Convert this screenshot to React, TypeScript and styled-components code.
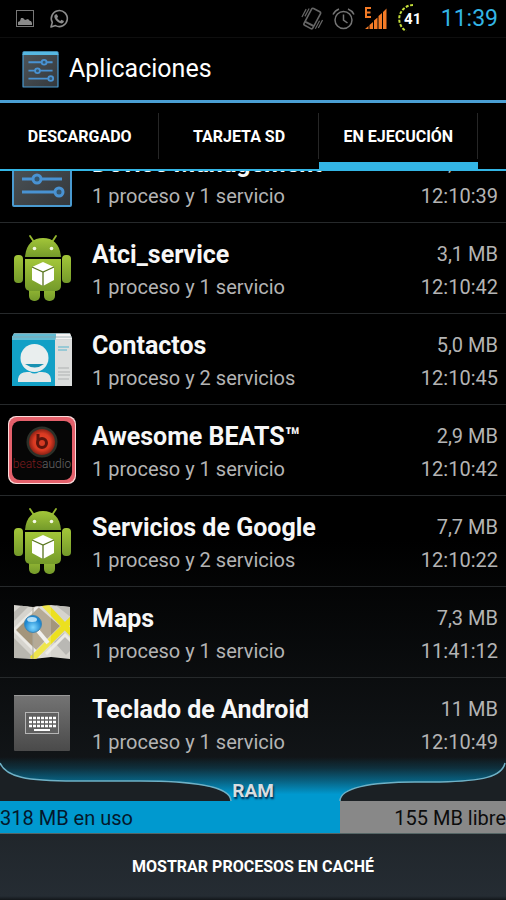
import React from 'react';
import styled, { createGlobalStyle } from 'styled-components';

const GlobalStyle = createGlobalStyle`
  *, *::before, *::after { box-sizing: border-box; }
  body { margin: 0; background: #000; }
  button { font: inherit; color: inherit; border: 0; padding: 0; background: none; cursor: pointer; }
`;

const Screen = styled.div`
  display: flex;
  flex-direction: column;
  height: 100vh;
  overflow: hidden;
  color: #fff;
  background: linear-gradient(#000 0, #000 60%, #14181b 88%, #1c2024 100%);
  font-family: Roboto, "Liberation Sans", sans-serif;
`;

const StatusBar = styled.div`
  display: flex;
  align-items: center;
  justify-content: space-between;
  flex: none;
  height: 37px;
  padding: 0 8px 0 15px;
  background: #000;
`;

const StatusGroup = styled.div<{ $gap: number }>`
  display: flex;
  align-items: center;
  gap: ${(p) => p.$gap}px;
`;

const Clock = styled.time`
  margin-left: 3px;
  font-size: 23px;
  line-height: 36px;
  color: #33b5e5;
`;

const ActionBar = styled.header`
  display: flex;
  align-items: center;
  gap: 8px;
  flex: none;
  height: 66px;
  padding: 0 20px;
  background: #000;
  border-top: 1px solid #0e0e0e;
  border-bottom: 3px solid #4a9fd4;
`;

const Title = styled.h1`
  margin: 0;
  font-size: 25px;
  line-height: 36px;
  font-weight: 400;
`;

const Tabs = styled.nav`
  display: grid;
  grid-template-columns: repeat(3, 1fr) 28px;
  flex: none;
  height: 68px;
  background: #000;
  border-bottom: 2px solid #33b5e5;
`;

const Tab = styled.button<{ $active?: boolean }>`
  height: 68px;
  padding-top: ${(p) => (p.$active ? 9 : 0)}px;
  border-bottom: ${(p) => (p.$active ? '9px solid #33b5e5' : '0')};
  background: linear-gradient(#262626, #262626) right 10px / 1px 46px no-repeat;
  font-size: 16px;
  line-height: 24px;
  font-weight: 700;
  white-space: nowrap;
`;

const List = styled.ul`
  display: flex;
  flex-direction: column;
  justify-content: flex-end;
  flex: 1;
  min-height: 0;
  margin: 0;
  padding: 0;
  overflow: hidden;
  list-style: none;
`;

const Row = styled.li`
  display: grid;
  grid-template-columns: 68px 1fr auto;
  column-gap: 16px;
  align-items: center;
  flex: none;
  height: 91px;
  padding: 0 8px;
  border-bottom: 1px solid #26292b;

  &:last-child { border-bottom-color: transparent; }
`;

const Lines = styled.div<{ $end?: boolean }>`
  display: flex;
  flex-direction: column;
  padding-top: 5px;
  text-align: ${(p) => (p.$end ? 'right' : 'left')};
  white-space: nowrap;
`;

const Name = styled.span`
  font-size: 25px;
  line-height: 33px;
  font-weight: 700;
  color: #f7f7f7;
`;

const Detail = styled.span`
  font-size: 20px;
  line-height: 33px;
  color: #b4b4b4;
`;

const Ram = styled.section`
  position: relative;
  flex: none;
  margin-top: -12px;
`;

const Shelf = styled.svg`
  display: block;
  width: 100%;
  height: 44px;
`;

const RamLabel = styled.h2`
  position: absolute;
  top: 22px;
  left: 0;
  right: 0;
  margin: 0;
  font-size: 19px;
  line-height: 24px;
  font-weight: 700;
  text-align: center;
  color: #d9dde0;
  text-shadow: 1px 2px 2px #024;
`;

const Meter = styled.div`
  display: flex;
  height: 33px;
  border-bottom: 1px solid #566;
  font-size: 20px;
  line-height: 34px;
  white-space: nowrap;
`;

const Used = styled.div`
  background: #0099cf;
  color: #04182b;
`;

const Free = styled.div`
  flex: 1;
  background: #888;
  color: #0c0c0c;
  text-align: right;
`;

const CacheButton = styled.button`
  flex: none;
  height: 66px;
  background: linear-gradient(#20262b, #252c33 94%, #12161a);
  font-size: 16px;
  line-height: 24px;
  font-weight: 700;
`;

const ImageIcon = () => (
  <svg width="20" height="20" viewBox="0 0 20 20" aria-hidden="true">
    <rect x="1.5" y="1.5" width="17" height="16" fill="none" stroke="#777" />
    <path d="M3 16v-3l2-1 1-3h2l2 2 3-1 2 2h1l1 2v2z" fill="#8a8a8a" />
  </svg>
);

const ChatIcon = () => (
  <svg width="20" height="20" viewBox="0 0 20 20" aria-hidden="true">
    <path d="M2 18l1.3-4.6a8 8 0 1 1 3.2 3.2z" fill="none" stroke="#8c8c8c" strokeWidth="1.6" strokeLinejoin="round" />
    <path d="M6.4 5.4l1.5-.2 1.2 2.5-1 1.200c.8 1.500 1.800 2.400 3.200 3l1.200-1.200 2.400 1.200c0 1.600-1.200 2.600-2.600 2.500C9 14 5.300 10.300 5.300 7.300c0-.8.4-1.500 1.100-1.900z" fill="#8c8c8c" />
  </svg>
);

const VibrateIcon = () => (
  <svg width="22" height="24" viewBox="0 0 22 24" fill="none" stroke="#666" aria-hidden="true">
    <g transform="rotate(28 11 12)">
      <rect x="6" y="2" width="10" height="19" rx="1.5" strokeWidth="1.6" />
      <path d="M6 17.5h10" strokeWidth="2" />
      <path d="M3.5 4v9M1.2 6v9M18.5 10v9M20.8 8v9" strokeWidth="1.2" />
    </g>
  </svg>
);

const AlarmIcon = () => (
  <svg width="23" height="24" viewBox="0 0 23 24" fill="none" stroke="#747474" strokeWidth="1.5" aria-hidden="true">
    <circle cx="11.5" cy="13" r="8.5" />
    <path d="M11.5 7.5v5.5l4 3M1 7.5Q3 3.5 7 2M22 7.5Q20 3.5 16 2" />
  </svg>
);

const SignalIcon = () => (
  <svg width="24" height="26" viewBox="0 0 24 26" fill="#f47b26" aria-hidden="true">
    <path d="M1 1h6v2H3v2.5h3.500v2H3V10h4v2H1z" />
    <path d="M1 23l3.500-3v3zM5.500 19l3.500-3v7H5.500zM10 14.500l3.500-3V23H10zM14.500 10l3.500-3v16h-3.500zM19 6l3.500-3.500V23H19z" />
  </svg>
);

const BatteryWrap = styled.span`
  display: grid;
  place-items: center;
  width: 32px;
  height: 32px;
  font-size: 15px;
  line-height: 20px;
  font-weight: 700;

  & > * { grid-area: 1 / 1; }
`;

const Battery = () => (
  <BatteryWrap>
    <svg width="32" height="32" viewBox="0 0 32 32" fill="none" aria-hidden="true">
      <path d="M16 2A14 14 0 0 0 9 28" stroke="#c5df3a" strokeWidth="2" strokeDasharray="3 1.5" />
    </svg>
    <span>41</span>
  </BatteryWrap>
);

const SettingsIcon = ({ size }: { size: number }) => (
  <svg width={size} height={size} viewBox="0 0 68 68" aria-hidden="true">
    <defs>
      <linearGradient id="metal" x1="0" y1="0" x2="1" y2="1">
        <stop offset="0" stopColor="#4e5559" />
        <stop offset="1" stopColor="#34383c" />
      </linearGradient>
    </defs>
    <rect x="5" y="5" width="58" height="58" rx="1" fill="url(#metal)" stroke="#4a9ad0" strokeWidth="2" />
    <path d="M4 10l2-6h56l2 6z" fill="#56b8e2" />
    <g stroke="#4992d2" strokeWidth="3" fill="#35566e">
      <path d="M14 22h40M14 36h40M14 49h40" />
      <circle cx="40" cy="22" r="4" />
      <circle cx="29" cy="36" r="4" />
      <circle cx="51" cy="49" r="4" />
    </g>
  </svg>
);

const AndroidIcon = () => (
  <svg width="68" height="68" viewBox="0 0 68 68" aria-hidden="true">
    <defs>
      <linearGradient id="droid" x1="0" y1="0" x2="0" y2="1">
        <stop offset="0" stopColor="#a3c639" />
        <stop offset="1" stopColor="#749a2a" />
      </linearGradient>
    </defs>
    <path d="M26 8l-4-6M44 8l4-6" stroke="#96b92f" strokeWidth="1.8" strokeLinecap="round" />
    <g fill="url(#droid)">
      <rect x="21" y="48" width="11" height="19" rx="5" />
      <rect x="36" y="48" width="11" height="19" rx="5" />
      <rect x="6" y="21" width="9" height="28" rx="4" />
      <rect x="54" y="21" width="9" height="28" rx="4" />
      <path d="M17 23C18 10 25 4 35 4s17 6 18 19z" />
      <path d="M17 25h36v27a5 5 0 0 1-5 5H22a5 5 0 0 1-5-5z" />
    </g>
    <g fill="#f4f8e4">
      <circle cx="26.5" cy="14.5" r="1.8" />
      <circle cx="43.5" cy="14.5" r="1.8" />
      <path d="M35 28l11 5v13L35 52l-11-6V33z" fill="#fff" />
    </g>
    <path d="M24 33l11 5 11-5M35 38v14" fill="none" stroke="#59751e" strokeWidth="1.3" />
  </svg>
);

const ContactsIcon = () => (
  <svg width="68" height="68" viewBox="0 0 68 68" aria-hidden="true">
    <path d="M6 9h56l2 4v47H46V12H4z" fill="#d6dadb" />
    <path d="M6 8h42v4l-1 4H4v-4z" fill="#62bcd4" />
    <path d="M48 8h14l2 6H48z" fill="#f4f4f4" />
    <path d="M6 8.500h56M5 12h59" stroke="#8da3a9" strokeWidth=".8" />
    <path d="M4 15h43v46H4z" fill="#12a0c6" />
    <path d="M47 15h17v46H47z" fill="#dcdedd" />
    <circle cx="26.5" cy="33" r="14" fill="#e9eeee" />
    <path d="M17 39h19q-9 7-19 0z" fill="#1791b2" />
    <path d="M10 57v-3q1-7 9-7h3q4 3 9 0h3q8 0 9 7v3z" fill="#e4e8e8" />
    <path d="M50 22h11M50 25h9" stroke="#55b4ce" strokeWidth="1.2" />
    <path d="M50 43h11M50 47h12M50 50h12M50 54h11" stroke="#aeb1b1" />
  </svg>
);

const BeatsIcon = () => (
  <svg width="68" height="68" viewBox="0 0 68 68" aria-hidden="true">
    <defs>
      <radialGradient id="beat">
        <stop offset="0" stopColor="#e5482a" />
        <stop offset=".65" stopColor="#da3a22" />
        <stop offset="1" stopColor="#8a2115" />
      </radialGradient>
    </defs>
    <rect x="0" y="0" width="68" height="68" rx="8" fill="#fbdada" />
    <rect x="1" y="1" width="66" height="66" rx="8" fill="#e4606b" />
    <rect x="4" y="5" width="60" height="59" rx="8" fill="#060606" />
    <circle cx="34" cy="26" r="15.5" fill="#2c3029" />
    <circle cx="34" cy="26" r="13" fill="url(#beat)" />
    <path d="M30 18v9" stroke="#5b140c" strokeWidth="3" />
    <circle cx="34" cy="27" r="4.500" fill="#d63b24" stroke="#5b140c" strokeWidth="3" />
    <text x="34" y="52" textAnchor="middle" fontFamily="Roboto, sans-serif" fontSize="12" fontWeight="300">
      <tspan fill="#7d1c1e">beats</tspan>
      <tspan fill="#666">audio</tspan>
    </text>
  </svg>
);

const MapsIcon = () => (
  <svg width="68" height="68" viewBox="0 0 68 68" aria-hidden="true">
    <defs>
      <clipPath id="sheet">
        <path d="M6 7l19 2 18-2 19 2v52l-19-2-18 2-19-1z" />
      </clipPath>
      <radialGradient id="pin" cx=".5" cy=".7">
        <stop offset="0" stopColor="#7fd7ff" />
        <stop offset="1" stopColor="#1c86d0" />
      </radialGradient>
    </defs>
    <g clipPath="url(#sheet)">
      <rect width="68" height="68" fill="#d6d4ce" />
      <path d="M28 7l24 21-24 24L7 32z" fill="#a3957c" />
      <path d="M6 40l20 20H6z" fill="#b9b7b0" />
      <path d="M46 44l10-9 12 12-10 10z" fill="#b9b8b4" />
      <path d="M46 6h18v14z" fill="#bdbcb6" />
      <path d="M6 14l9-8h8L6 23z" fill="#bab8b2" />
      <path d="M4 34L30 8M4 30l28 28M56 36l14 14M38 56l18-18" stroke="#ebe9e4" strokeWidth="3" />
      <path d="M34 4l34 36M24 61l43-43" stroke="#ece01f" strokeWidth="6" />
      <path d="M25 8h18v53H25z" fill="#fff" opacity=".2" />
      <path d="M25 9v52" stroke="#aaa79b" />
    </g>
    <path d="M30 33l10 12" stroke="#f1f1ee" strokeWidth="4" />
    <circle cx="25" cy="26" r="8.5" fill="url(#pin)" stroke="#3f86b2" />
    <ellipse cx="24" cy="21.5" rx="5" ry="2.500" fill="#d8f2ff" opacity=".8" />
  </svg>
);

const KeyboardIcon = () => (
  <svg width="68" height="68" viewBox="0 0 68 68" aria-hidden="true">
    <defs>
      <linearGradient id="slab" x1="0" y1="0" x2="0" y2="1">
        <stop offset="0" stopColor="#747474" />
        <stop offset="1" stopColor="#4a4a4a" />
      </linearGradient>
    </defs>
    <rect x="6" y="6" width="56" height="56" rx="1" fill="url(#slab)" />
    <path d="M6 6.500h56" stroke="#999" />
    <rect x="17.500" y="23.500" width="33" height="21" fill="#606060" stroke="#b5b5b5" />
    <path d="M21 29h27M21 33h27M21 37h27" stroke="#fff" strokeWidth="2.5" strokeDasharray="3 1" />
    <path d="M26 41h16" stroke="#fff" strokeWidth="2" />
  </svg>
);

const apps = [
  { name: 'Device Management', detail: '1 proceso y 1 servicio', size: '1,9 MB', time: '12:10:39', icon: <SettingsIcon size={68} /> },
  { name: 'Atci_service', detail: '1 proceso y 1 servicio', size: '3,1 MB', time: '12:10:42', icon: <AndroidIcon /> },
  { name: 'Contactos', detail: '1 proceso y 2 servicios', size: '5,0 MB', time: '12:10:45', icon: <ContactsIcon /> },
  { name: 'Awesome BEATS™', detail: '1 proceso y 1 servicio', size: '2,9 MB', time: '12:10:42', icon: <BeatsIcon /> },
  { name: 'Servicios de Google', detail: '1 proceso y 2 servicios', size: '7,7 MB', time: '12:10:22', icon: <AndroidIcon /> },
  { name: 'Maps', detail: '1 proceso y 1 servicio', size: '7,3 MB', time: '11:41:12', icon: <MapsIcon /> },
  { name: 'Teclado de Android', detail: '1 proceso y 1 servicio', size: '11 MB', time: '12:10:49', icon: <KeyboardIcon /> },
];

const memory = { used: 318, free: 155 };

export default function App() {
  return (
    <>
      <GlobalStyle />
      <Screen>
        <StatusBar>
          <StatusGroup $gap={14}>
            <ImageIcon />
            <ChatIcon />
          </StatusGroup>
          <StatusGroup $gap={9}>
            <VibrateIcon />
            <AlarmIcon />
            <SignalIcon />
            <Battery />
            <Clock>11:39</Clock>
          </StatusGroup>
        </StatusBar>
        <ActionBar>
          <SettingsIcon size={41} />
          <Title>Aplicaciones</Title>
        </ActionBar>
        <Tabs>
          <Tab>DESCARGADO</Tab>
          <Tab>TARJETA SD</Tab>
          <Tab $active aria-current="page">EN EJECUCIÓN</Tab>
        </Tabs>
        <List>
          {apps.map((app) => (
            <Row key={app.name}>
              {app.icon}
              <Lines>
                <Name>{app.name}</Name>
                <Detail>{app.detail}</Detail>
              </Lines>
              <Lines $end>
                <Detail>{app.size}</Detail>
                <Detail>{app.time}</Detail>
              </Lines>
            </Row>
          ))}
        </List>
        <Ram>
          <Shelf viewBox="0 0 506 44" preserveAspectRatio="none" aria-hidden="true">
            <defs>
              <linearGradient id="glow" x1="0" y1="0" x2="0" y2="1">
                <stop offset="0" stopColor="#0099cf" stopOpacity="0" />
                <stop offset=".25" stopColor="#0099cf" stopOpacity=".2" />
                <stop offset=".55" stopColor="#0099cf" stopOpacity=".58" />
                <stop offset=".85" stopColor="#0099cf" />
              </linearGradient>
            </defs>
            <rect width="506" height="44" fill="url(#glow)" />
            <path d="M0 6C6 20 26 24 75 24H140C190 24 231 29 231 44H0z" fill="#1b2024" />
            <path d="M506 6C502 20 482 24 440 25H415C370 25 340 31 340 44H506z" fill="#1b2024" />
            <path
              d="M0 6C6 20 26 24 75 24H140C190 24 231 29 231 44M505 6C502 20 482 24 440 25H415C370 25 340 31 340 44"
              fill="none"
              stroke="#6fb1c6"
              strokeWidth="1.5"
            />
          </Shelf>
          <RamLabel>RAM</RamLabel>
          <Meter>
            <Used style={{ width: `${(memory.used / (memory.used + memory.free)) * 100}%` }}>{memory.used} MB en uso</Used>
            <Free>{memory.free} MB libre</Free>
          </Meter>
        </Ram>
        <CacheButton>MOSTRAR PROCESOS EN CACHÉ</CacheButton>
      </Screen>
    </>
  );
}
